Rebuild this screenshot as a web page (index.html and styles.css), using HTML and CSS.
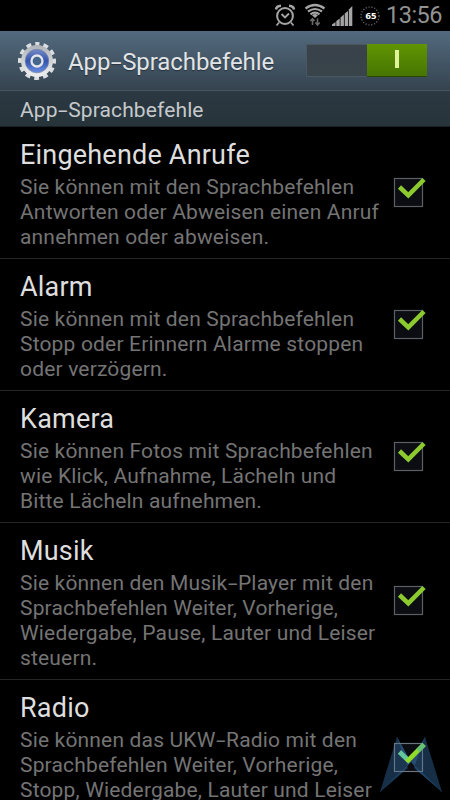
FILE: index.html
```html
<!DOCTYPE html>
<html lang="de">
<head>
<meta charset="utf-8">
<title>App-Sprachbefehle</title>
<link rel="stylesheet" href="styles.css">
</head>
<body>
<svg class="defs" width="0" height="0" aria-hidden="true">
  <symbol id="check" viewBox="0 0 34 32">
    <rect x="1.5" y="2.5" width="28" height="28" fill="#0b0d12" stroke="#596066" stroke-width="1.2"/>
    <path d="M6.500 11L15.300 19.300L31 3.500" fill="none" stroke="#8cca30" stroke-width="4.600"/>
  </symbol>
</svg>
<div class="screen">
  <div class="status">
    <svg class="status-icons" width="112" height="30" viewBox="0 0 112 30">
      <g fill="none" stroke="#a5a5a5">
        <circle cx="12" cy="16" r="7.9" stroke-width="2"/>
        <path d="M8.500 14L12 17.500L16 13.500M6 22.500L3.500 25.500M18 22.500L20.500 25.500" stroke-width="1.800"/>
        <path d="M3 9.500Q3.500 6 8 5.800M21 9.500Q20.500 6 16 5.800" stroke-width="2.600"/>
        <path d="M32.500 8.500Q42 1.500 51.500 8.500M35 11.500Q42 6.500 49 11.500M37.500 14.300Q42 11 46.500 14.300" stroke-width="2.200"/>
        <path d="M39.500 25V19M37.300 21L39.500 18.600L41.500 21M44.500 18.500V25M42.400 22.500L44.500 25L46.700 22.500" stroke="#686868" stroke-width="1.600"/>
      </g>
      <path d="M39 15.200Q42 13 45 15.200L42 18Z" fill="#a5a5a5"/>
      <g fill="#a5a5a5">
        <path d="M59 26V24.500L62.500 22V26Z"/><path d="M63.300 26V21L66.700 18.500V26Z"/>
        <path d="M67.500 26V17.500L70.900 14.500V26Z"/><path d="M71.700 26V13.500L75 11V26Z"/><path d="M75.800 26V9.500L79.300 6V26Z"/>
      </g>
      <circle cx="97" cy="16" r="9" fill="none" stroke="#707070" stroke-width="1.2" stroke-dasharray="1.2 1.700"/>
      <text x="98" y="19.300" class="battery">65</text>
    </svg>
    <span class="clock">13:56</span>
  </div>
  <header class="bar">
    <svg class="gear" width="40" height="40" viewBox="-20 -20 40 40">
      <defs>
        <linearGradient id="metal" x1="0" y1="0" x2="0" y2="1"><stop offset="0" stop-color="#aeb3b8"/><stop offset="1" stop-color="#f0f0f0"/></linearGradient>
        <linearGradient id="blue" x1="0" y1="0" x2="0" y2="1"><stop offset="0" stop-color="#7589c9"/><stop offset=".5" stop-color="#3554ac"/><stop offset="1" stop-color="#6a8de2"/></linearGradient>
      </defs>
      <circle r="17" fill="none" stroke="#dcdfe1" stroke-width="4" stroke-dasharray="4.900 4.001" stroke-dashoffset="2.450" transform="rotate(-90)"/>
      <circle r="16" fill="url(#metal)"/>
      <circle r="11.800" fill="url(#blue)" stroke="#7784a5" stroke-width=".7"/>
      <circle r="5.500" fill="#46658f" stroke="#e4e6e9" stroke-width="2.300"/>
    </svg>
    <h1 class="bar-title">App<span class="hyphen">-</span>Sprachbefehle</h1>
    <div class="switch"><div class="thumb"><i class="mark"></i></div></div>
  </header>
  <div class="section">App<span class="hyphen">-</span>Sprachbefehle</div>
  <main>
    <div class="row">
      <div><h2 class="title">Eingehende Anrufe</h2>
      <p class="desc">Sie können mit den Sprachbefehlen<br>Antworten oder Abweisen einen Anruf<br>annehmen oder abweisen.</p></div>
      <svg class="box"><use href="#check"/></svg>
    </div>
    <div class="row">
      <div><h2 class="title">Alarm</h2>
      <p class="desc">Sie können mit den Sprachbefehlen<br>Stopp oder Erinnern Alarme stoppen<br>oder verzögern.</p></div>
      <svg class="box"><use href="#check"/></svg>
    </div>
    <div class="row">
      <div><h2 class="title">Kamera</h2>
      <p class="desc">Sie können Fotos mit Sprachbefehlen<br>wie Klick, Aufnahme, Lächeln und<br>Bitte Lächeln aufnehmen.</p></div>
      <svg class="box"><use href="#check"/></svg>
    </div>
    <div class="row tall">
      <div><h2 class="title">Musik</h2>
      <p class="desc">Sie können den Musik<span class="hyphen">-</span>Player mit den<br>Sprachbefehlen Weiter, Vorherige,<br>Wiedergabe, Pause, Lauter und Leiser<br>steuern.</p></div>
      <svg class="box"><use href="#check"/></svg>
    </div>
    <div class="row tall">
      <div><h2 class="title">Radio</h2>
      <p class="desc">Sie können das UKW<span class="hyphen">-</span>Radio mit den<br>Sprachbefehlen Weiter, Vorherige,<br>Stopp, Wiedergabe, Lauter und Leiser</p></div>
      <svg class="box"><use href="#check"/></svg>
    </div>
  </main>
  <svg class="watermark" width="70" height="62" viewBox="0 0 70 62">
    <g fill="#32689c" fill-opacity=".45">
      <path d="M20 2L34 27L25 37L3 57Z"/><path d="M20 2L34 27L3 57L31 33Z"/>
      <path d="M48 2L34 27L42 37L65 57Z"/><path d="M48 2L34 27L65 57L37 33Z"/>
    </g>
    <path d="M20 2L25 34L3 57M48 2L42 34L65 57" fill="none" stroke="#163a5b" stroke-opacity=".6"/>
    <rect x="17.500" y="8.500" width="28" height="28" fill="none" stroke="#74828f" stroke-opacity=".65"/>
    <path d="M22.500 17L31.300 25.300" fill="none" stroke="#64c69b" stroke-width="4.600"/>
    <path d="M29.700 26.900L47 9.500" fill="none" stroke="#90dc28" stroke-width="4.600"/>
    <path d="M41 15.500L47 9.500" fill="none" stroke="#65c276" stroke-width="4.600"/>
  </svg>
</div>
</body>
</html>
```

FILE: styles.css
```css
* { box-sizing: border-box; }
body { margin: 0; background: #000; }
.defs { position: absolute; }
.screen { position: relative; width: 450px; height: 800px; overflow: hidden; background: #000; font-family: Roboto, "Liberation Sans", sans-serif; white-space: nowrap; }
.status { height: 31px; display: flex; padding-left: 273px; }
.clock { font-size: 23.5px; line-height: 31px; color: #929292; margin-left: 1px; letter-spacing: -.5px; }
.battery { font: bold 9.5px "Open Sans", sans-serif; fill: #fff; text-anchor: middle; }
.bar { height: 60px; display: flex; align-items: center; padding: 0 23px 0 17px; background: linear-gradient(#526a7e, #35434f); border-bottom: 1px solid #465460; }
.gear { flex: none; }
.bar-title { margin: 3px 0 0 11px; font-weight: 400; font-size: 24px; letter-spacing: -.08px; color: #e1e4e7; text-shadow: 0 1px 1px #26313b; }
.hyphen { display: inline-block; transform: scaleX(1.65); margin: 0 .11em; }
.switch { width: 121px; height: 33px; margin-left: auto; background: linear-gradient(#3a424a, #38434a); border: 1px solid #4c5861; display: flex; justify-content: flex-end; }
.thumb { width: 60px; height: 33px; margin: -1px -1px 0 0; background: linear-gradient(#619404, #477500); border-bottom: 1px solid #294807; display: flex; align-items: center; justify-content: center; }
.mark { width: 4px; height: 18px; background: #dff398; margin-top: -2px; }
.section { height: 36px; padding-left: 20px; line-height: 38px; font-size: 21px; letter-spacing: .12px; color: #c5c9cc; background: linear-gradient(#2c3842, #26343a); border-bottom: 1px solid #182025; }
.row { height: 132px; padding: 8px 23px 0 20px; border-bottom: 1px solid #262626; display: flex; justify-content: space-between; }
.tall { height: 157px; }
.title { margin: 0; font-weight: 400; font-size: 27px; letter-spacing: .2px; line-height: 40px; color: #dedede; }
.desc { margin: 0; font-size: 21px; letter-spacing: .17px; line-height: 25px; color: #747474; }
.box { width: 34px; height: 32px; flex: none; align-self: center; margin-top: -10px; }
.watermark { position: absolute; left: 377px; top: 735px; }
```
